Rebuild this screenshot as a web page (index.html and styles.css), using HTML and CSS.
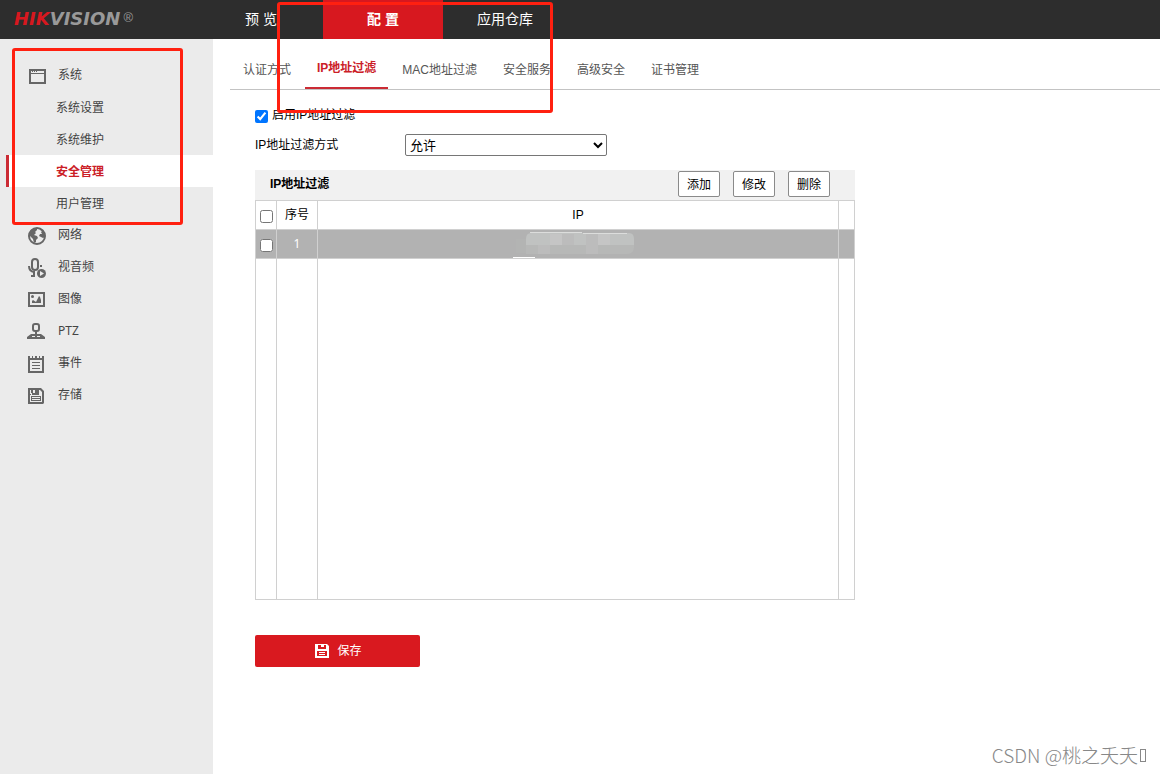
FILE: index.html
```html
<!DOCTYPE html>
<html lang="zh-CN">
<head>
<meta charset="utf-8">
<title>HIKVISION</title>
<link rel="stylesheet" href="styles.css">
</head>
<body>
<header class="topbar">
  <div class="logo"><span class="logo-red">HIK</span><span>VISION</span><span class="logo-reg">®</span></div>
  <nav class="mainnav">
    <a href="#">预 览</a>
    <a href="#" class="current">配 置</a>
    <a href="#">应用仓库</a>
  </nav>
</header>
<div class="body">
  <nav class="sidebar">
    <a href="#" class="group">
      <svg class="icon" viewBox="0 0 20 20"><path fill="#666" fill-rule="evenodd" d="M1 2h17v15H1zM3 4v2h13V4zM3 7v8h13V7z"/><path fill="#666" d="M4 4h1v1H4zM6 4h1v1H6zM8 4h1v1H8z"/></svg>
      系统</a>
    <a href="#" class="item">系统设置</a>
    <a href="#" class="item">系统维护</a>
    <a href="#" class="item active">安全管理</a>
    <a href="#" class="item">用户管理</a>
    <a href="#" class="group">
      <svg class="icon" viewBox="0 0 20 20"><circle cx="9" cy="9" r="8" fill="none" stroke="#666" stroke-width="2"/><path fill="#666" d="M1 6l2-3 4-2h2v2L7 5l1 1-2 2 3 1 1 2-2 2v2l-2 1-1-4-4-4zM11 1l4 2 2 4v3l-2 1-2-1-2-1 1-2h2l-1-2 1-1-2-1z"/></svg>
      网络</a>
    <a href="#" class="group">
      <svg class="icon" viewBox="0 0 20 20"><rect x="4" y="0" width="6" height="11" rx="3" fill="none" stroke="#666" stroke-width="2"/><path d="M1 7c0 4 2 6 6 6M3 17h4M6 13v4" fill="none" stroke="#666" stroke-width="2"/><path fill="#666" d="M12 6h2v2h-2z"/><circle cx="13.500" cy="14.500" r="4.500" fill="#666"/><path d="M12 12l4 2.500-4 2.500z" fill="#ebebeb"/></svg>
      视音频</a>
    <a href="#" class="group">
      <svg class="icon" viewBox="0 0 20 20"><path fill="none" stroke="#666" stroke-width="2" d="M1 2h15v13H1z"/><circle cx="4.500" cy="5.500" r="1.500" fill="#666"/><path fill="#666" d="M4 12v-2l1-1 3 2 3-6 1 1 1 3v3z"/></svg>
      图像</a>
    <a href="#" class="group">
      <svg class="icon" viewBox="0 0 20 20"><rect x="5" y="1" width="6" height="7" rx="2" fill="none" stroke="#666" stroke-width="2"/><path fill="#666" d="M7 9h2v2h4l4 3v2H-1v-2l4-3h4zM4 13v1h3v-1zM9 13v1h3v-1z" fill-rule="evenodd"/></svg>
      PTZ</a>
    <a href="#" class="group">
      <svg class="icon" viewBox="0 0 20 20"><path fill="#666" fill-rule="evenodd" d="M0 1h2v2h2V1h1v2h2V1h2v2h2V1h1v2h2V1h2v17H0zM2 5v11h12V5z"/><path stroke="#666" d="M4 7.500h8M4 10.500h8M4 13.500h8"/></svg>
      事件</a>
    <a href="#" class="group">
      <svg class="icon" viewBox="0 0 20 20"><path fill="#666" fill-rule="evenodd" d="M0 1h13l3 3v12l-1 1H0zM2 3v12h12V5l-2-2z"/><path fill="#666" fill-rule="evenodd" d="M3 3h8v5H3zM5 3v3h2V3zM2 7h1v-1h1v2H2zM3 9h10v5H3zM4 10v1h8v-1zM4 12v1h8v-1z"/></svg>
      存储</a>
  </nav>
  <main class="content">
    <nav class="tabs">
      <a href="#">认证方式</a>
      <a href="#" class="current">IP地址过滤</a>
      <a href="#">MAC地址过滤</a>
      <a href="#">安全服务</a>
      <a href="#">高级安全</a>
      <a href="#">证书管理</a>
    </nav>
    <form class="panel">
      <label class="enable"><input type="checkbox" checked><span>启用IP地址过滤</span></label>
      <div class="field">
        <label for="mode">IP地址过滤方式</label>
        <select id="mode"><option>允许</option><option>禁止</option></select>
      </div>
      <section class="filter">
        <div class="filter-head">
          <h2>IP地址过滤</h2>
          <button type="button">添加</button>
          <button type="button">修改</button>
          <button type="button">删除</button>
        </div>
        <table>
          <colgroup><col class="c-check"><col class="c-num"><col><col class="c-end"></colgroup>
          <thead>
            <tr><th><input type="checkbox" aria-label="全选"></th><th>序号</th><th>IP</th><th></th></tr>
          </thead>
          <tbody>
            <tr class="selected">
              <td><input type="checkbox" aria-label="选择 1"></td><td class="num">1</td>
              <td><svg class="mask" viewBox="0 0 130 28"><path fill="#b3b4b3" d="M3 9h10v14H3z"/><path fill="#c0c2c1" d="M13 9q0-6 5-6h98q5 0 5 6v6H13z"/><path fill="#b7b8b7" d="M13 15h108v2q0 7-7 7H13z"/><path fill="#c5c5c5" d="M37 4h12v11H37zM85 4h12v11H85z"/><path fill="#bcbcbc" d="M49 4h12v11H49zM73 4h12v11H73zM25 15h12v9H25zM73 15h12v9H73z"/><path stroke="#dcdddc" d="M17 2.500h52M70 3.500h44"/><path stroke="#fff" stroke-width="2" d="M0 28h22"/></svg></td>
              <td></td>
            </tr>
            <tr class="blank"><td></td><td></td><td></td><td></td></tr>
          </tbody>
        </table>
      </section>
      <button type="button" class="save">
        <svg viewBox="0 0 14 14"><path fill="#fff" fill-rule="evenodd" d="M0 0h12l2 2v12H0zM3 1v4h8V1H9v2H6V1zM2 7v5h10V7z"/><path stroke="#fff" d="M4 8.500h6M4 10.500h6"/></svg>
        保存</button>
    </form>
  </main>
</div>
<div class="mark mark-side"></div>
<div class="mark mark-tabs"></div>
<div class="watermark">CSDN @桃之夭夭<span class="tofu"></span></div>
</body>
</html>
```
FILE: styles.css
```css
* { box-sizing: border-box; }
body {
  margin: 0;
  min-height: 100vh;
  position: relative;
  display: flex;
  flex-direction: column;
  background: #fff;
  color: #000;
  font: 12px/16px "Liberation Sans", "Noto Sans CJK SC", sans-serif;
}
a { color: inherit; text-decoration: none; }
button, select { font: inherit; color: #000; }
input[type="checkbox"] { width: 13px; height: 13px; margin: 0; }

.topbar { display: flex; height: 39px; background: #2d2d2d; }
.logo {
  width: 201px;
  padding-left: 14px;
  color: #999;
  font: italic bold 18px/38px "DejaVu Sans", sans-serif;
  white-space: nowrap;
}
.logo-red { color: #d7181f; }
.logo-reg {
  margin-left: 3px;
  font: 13px/13px "Liberation Sans", sans-serif;
  vertical-align: 3px;
}
.mainnav { display: flex; gap: 2px; color: #fff; font-size: 14px; line-height: 38px; }
.mainnav a { width: 120px; text-align: center; }
.mainnav .current { background: #d7181f; font-weight: bold; }

.body { flex: 1; display: flex; }
.sidebar {
  width: 213px;
  flex: none;
  padding: 20px 0 0 6px;
  background: #ebebeb;
  color: #444;
}
.sidebar a { display: flex; align-items: center; height: 32px; }
.group { padding-left: 22px; gap: 10px; font-family: "Noto Sans", "Noto Sans CJK SC", sans-serif; }
.icon { width: 20px; height: 20px; margin-top: 4px; overflow: visible; }
.sidebar .item { padding: 2px 0 0 47px; border-left: 3px solid transparent; }
.sidebar .active {
  border-color: #cb2b34;
  background: #fff;
  background-clip: padding-box;
  color: #cb2027;
  font-weight: bold;
}

.content { flex: 1; padding-left: 17px; }
.tabs {
  display: flex;
  gap: 2px;
  height: 51px;
  padding-left: 1px;
  border-bottom: 1px solid #c3c3c3;
  color: #555;
  line-height: 16px;
}
.tabs a { padding: 23px 12px 0; }
.tabs .current {
  padding-top: 21px;
  border-bottom: 2px solid #cb2b34;
  color: #cb2027;
  font-weight: bold;
}

.panel { width: 625px; padding: 17px 0 0 25px; }
.enable { display: flex; align-items: center; gap: 4px; height: 16px; }
.enable input { margin-top: 2px; }
.field { display: flex; align-items: center; margin-top: 11px; }
.field label { width: 150px; }
.field select {
  width: 202px;
  height: 22px;
  padding: 0;
  border: 1px solid #767676;
  border-radius: 2px;
  background: #fff;
  font-size: 13px;
}

.filter { margin-top: 14px; }
.filter-head {
  display: flex;
  align-items: center;
  gap: 13px;
  height: 30px;
  padding: 0 25px 2px 15px;
  background: #f1f1f1;
}
.filter-head h2 { flex: 1; margin: 0; font-size: 12px; }
.filter-head button {
  width: 42px;
  height: 26px;
  padding: 1px 0 0;
  border: 1px solid #8a8a8a;
  border-radius: 2px;
  background: #fff;
}
table { width: 100%; table-layout: fixed; border-collapse: collapse; }
.c-check { width: 21px; }
.c-num { width: 41px; }
.c-end { width: 16px; }
th, td {
  height: 29px;
  padding: 0;
  border: 1px solid #d0d0d0;
  font-weight: normal;
  text-align: center;
  vertical-align: middle;
}
th input[type="checkbox"], td input[type="checkbox"] { display: block; margin: 2px 0 0 4px; }
.selected { background: #b2b2b2; color: #fff; }
.num { font-family: "Noto Sans", sans-serif; }
.mask { display: block; width: 130px; height: 28px; margin: 0 auto; }
.blank td { height: 341px; }

.save {
  display: flex;
  align-items: center;
  justify-content: center;
  gap: 8px;
  width: 165px;
  height: 32px;
  margin-top: 35px;
  padding: 0 0 0 2px;
  border: 0;
  border-radius: 2px;
  background: #d9191f;
  color: #fff;
}
.save svg { width: 14px; height: 14px; }

.mark {
  position: absolute;
  border: 3px solid #ff2010;
  border-radius: 3px;
  pointer-events: none;
}
.mark-side { left: 12px; top: 48px; width: 171px; height: 177px; }
.mark-tabs { left: 277px; top: 2px; width: 276px; height: 111px; }
.watermark {
  position: absolute;
  right: 14px;
  bottom: 7px;
  display: flex;
  align-items: center;
  color: #888;
  font: 300 19px/24px "Noto Sans CJK SC", sans-serif;
}
.tofu { width: 6px; height: 13px; margin-left: 2px; border: 1px solid #888; }
```
